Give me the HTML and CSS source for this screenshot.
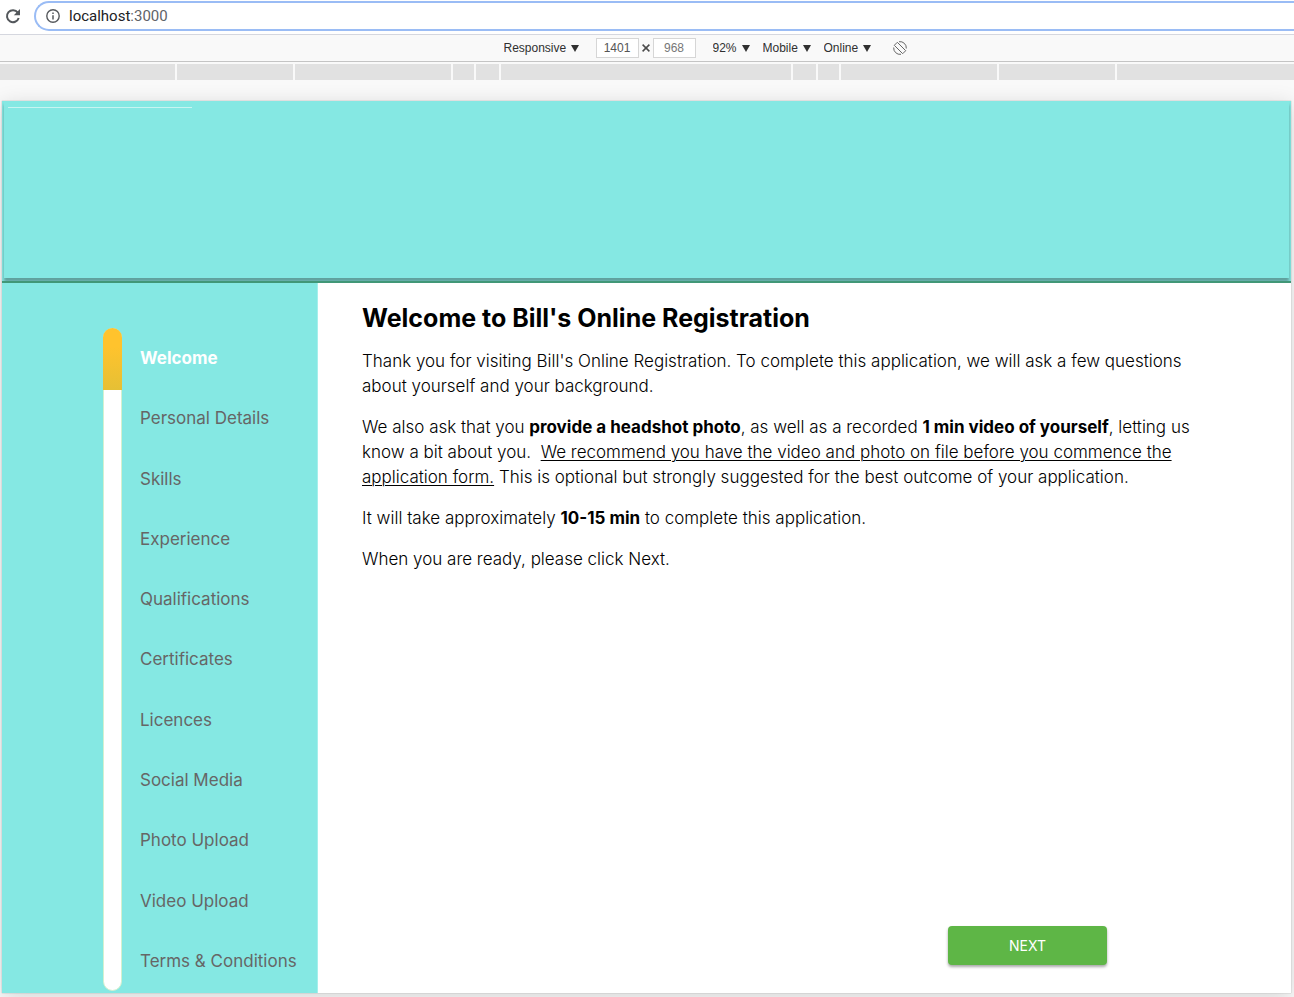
FILE: index.html
```html
<!DOCTYPE html>
<html lang="en">
<head>
<meta charset="utf-8">
<meta name="viewport" content="width=device-width, initial-scale=1">
<title>Bill's Online Registration</title>
<link rel="stylesheet" href="styles.css">
</head>
<body>
<div class="address-bar">
  <button class="reload" type="button" aria-label="Reload">
    <svg width="16" height="16" viewBox="0 0 16 16"><path d="M12.8 4.6A6 6 0 1 0 13.7 10" fill="none" stroke="#53575b" stroke-width="2"/><path d="M15 1v6.2H8.8z" fill="#53575b"/></svg>
  </button>
  <div class="omnibox">
    <svg width="14" height="14" viewBox="0 0 14 14" aria-hidden="true"><circle cx="7" cy="7" r="6.2" fill="none" stroke="#56595d" stroke-width="1.4"/><path d="M7 6.2v4.3M7 3.4v1.5" stroke="#56595d" stroke-width="1.5"/></svg>
    <a class="url" href="#">localhost<span class="port">:3000</span></a>
  </div>
</div>
<div class="device-bar">
  <div class="picker"><select aria-label="Device"><option>Responsive</option></select><svg width="8" height="7" viewBox="0 0 8 7"><path d="M0 0h8L4 7z"/></svg></div>
  <div class="dimensions">
    <input type="text" value="1401" aria-label="Width">
    <svg width="8" height="8" viewBox="0 0 8 8" aria-hidden="true"><path d="M.6.6l6.8 6.8M7.4.6L.6 7.4" stroke="#4a4a4a" stroke-width="1.5"/></svg>
    <input class="muted" type="text" value="968" aria-label="Height">
  </div>
  <div class="picker"><select aria-label="Zoom"><option>92%</option></select><svg width="8" height="7" viewBox="0 0 8 7"><path d="M0 0h8L4 7z"/></svg></div>
  <div class="picker"><select aria-label="Device type"><option>Mobile</option></select><svg width="8" height="7" viewBox="0 0 8 7"><path d="M0 0h8L4 7z"/></svg></div>
  <div class="picker"><select aria-label="Throttling"><option>Online</option></select><svg width="8" height="7" viewBox="0 0 8 7"><path d="M0 0h8L4 7z"/></svg></div>
  <button class="rotate" type="button" aria-label="Rotate">
    <svg width="14" height="14" viewBox="0 0 14 14" fill="none" stroke="#666" stroke-width="1"><path d="M4.300 1.300L12.700 9.700L9.700 12.700L1.300 4.300z"/><path d="M6 .7A6.300 6.300 0 0 1 13.300 7.500M8 13.300A6.300 6.300 0 0 1 .7 6.500"/></svg>
  </button>
</div>
<div class="ruler">
  <i></i><i class="w116"></i><i class="w156"></i><i class="w21"></i><i class="w23"></i><i class="w290"></i><i class="w23"></i><i class="w21"></i><i class="w156"></i><i class="w116"></i><i></i>
</div>
<div class="viewport">
  <div class="page">
    <header class="banner"><div class="banner-panel"><div class="banner-line"></div></div></header>
    <div class="columns">
      <aside class="sidebar">
        <div class="progress"><div class="progress-done"></div></div>
        <nav class="steps">
          <a class="current" href="#">Welcome</a>
          <a href="#">Personal Details</a>
          <a href="#">Skills</a>
          <a href="#">Experience</a>
          <a href="#">Qualifications</a>
          <a href="#">Certificates</a>
          <a href="#">Licences</a>
          <a href="#">Social Media</a>
          <a href="#">Photo Upload</a>
          <a href="#">Video Upload</a>
          <a href="#">Terms &amp; Conditions</a>
        </nav>
      </aside>
      <main class="content">
        <h1>Welcome to Bill's Online Registration</h1>
        <p>Thank you for visiting Bill's Online Registration. To complete this application, we will ask a few questions about yourself and your background.</p>
        <p>We also ask that you <b>provide a headshot photo</b>, as well as a recorded <b>1 min video of yourself</b>, letting us know a bit about you.&nbsp; <u>We recommend you have the video and photo on file before you commence the application form.</u> This is optional but strongly suggested for the best outcome of your application.</p>
        <p>It will take approximately <b>10-15 min</b> to complete this application.</p>
        <p>When you are ready, please click Next.</p>
        <button class="next" type="button">NEXT</button>
      </main>
    </div>
  </div>
</div>
</body>
</html>
```
FILE: styles.css
```css
* { box-sizing: border-box; }
body {
  margin: 0;
  min-height: 100vh;
  display: flex;
  flex-direction: column;
  background: #f9f9f9;
  font-family: Inter, sans-serif;
}
button { border: 0; padding: 0; background: none; }
svg { display: block; flex: none; }

.address-bar {
  display: flex;
  gap: 13px;
  height: 35px;
  padding: 1px 0 3px 5px;
  background: #fff;
  border-bottom: 1px solid #d5d7df;
}
.omnibox {
  flex: 1;
  display: flex;
  align-items: center;
  gap: 9px;
  padding-left: 10px;
  border: 2px solid #9abcf5;
  border-right: 0;
  border-radius: 15px 0 0 15px;
}
.url { color: #202124; font: 15px/20px Roboto, sans-serif; text-decoration: none; }
.port { color: #5f6368; }

.device-bar {
  display: flex;
  align-items: center;
  justify-content: center;
  gap: 13px;
  height: 27px;
  padding-left: 116px;
  border-bottom: 1px solid #c4c4c4;
}
.picker { display: flex; align-items: center; gap: 4px; color: #303030; }
.picker select {
  appearance: none;
  border: 0;
  padding: 0;
  background: none;
  color: inherit;
  font: 12px/16px "Liberation Sans", Arial, sans-serif;
}
.picker svg { fill: #303030; }
.dimensions { display: flex; align-items: center; gap: 3px; margin: 0 4px; }
.dimensions input {
  width: 43px;
  height: 20px;
  padding: 0;
  border: 1px solid #d6d6d6;
  background: #fff;
  color: #555;
  font: 12px/16px "Liberation Sans", Arial, sans-serif;
  text-align: center;
}
.dimensions .muted { color: #777; }
.rotate { margin-left: 9px; }

.ruler { display: flex; gap: 2px; height: 16px; margin: 2px 0 0 -2px; }
.ruler i { flex: 1; background: #e1e1e1; }
.ruler .w21 { flex: 0 0 21px; }
.ruler .w23 { flex: 0 0 23px; }
.ruler .w116 { flex: 0 0 116px; }
.ruler .w156 { flex: 0 0 156px; }
.ruler .w290 { flex: 0 0 290px; }

.viewport {
  flex: 1;
  display: flex;
  padding: 21px 3px 4px 2px;
  overflow: hidden;
}
.page {
  flex: 1;
  display: flex;
  flex-direction: column;
  background: #fff;
  box-shadow: 0 0 1px #999, 0 4px 20px rgba(0, 0, 0, .15);
}
.banner {
  height: 182px;
  padding: 0 2px 3px;
  background: #85e8e3;
  border-bottom: 2px solid #419777;
  overflow: hidden;
}
.banner-panel {
  height: 100%;
  padding: 6px 4px;
  box-shadow: 0 4px 3px rgba(60, 90, 90, .5);
}
.banner-line { width: 184px; height: 1px; background: #c8f4f1; }
.columns { flex: 1; display: flex; }
.sidebar {
  flex: 0 0 316px;
  display: flex;
  gap: 18px;
  padding: 45px 0 2px 101px;
  background: #85e8e3;
  border-right: 1px solid #a5efeb;
}
.progress {
  width: 19px;
  border: 1px solid #d5f0cf;
  border-radius: 10px;
  background: #fff;
}
.progress-done {
  width: 19px;
  height: 62px;
  margin: -1px;
  border-radius: 10px 10px 0 0;
  background: linear-gradient(#ffc32d 30%, #e5c035);
}
.steps { flex: 1; display: grid; grid-template-rows: repeat(11, 1fr); }
.steps a {
  display: flex;
  align-items: center;
  color: #666;
  font-size: 17px;
  line-height: 24px;
  text-decoration: none;
  white-space: nowrap;
}
.steps .current { color: #fff; font-weight: 700; }

.content {
  flex: 1;
  display: flex;
  flex-direction: column;
  padding: 16px 84px 28px 44px;
  color: #000;
  font-size: 17px;
  font-weight: 300;
  line-height: 25px;
}
h1 { margin: 0 0 12px; font-size: 25px; line-height: 38px; font-weight: 700; }
p { margin: 0 0 16px; }
b { font-weight: 700; }
u { text-underline-offset: 2px; text-decoration-thickness: 1px; }
.next {
  width: 159px;
  height: 39px;
  margin: auto 100px 0 auto;
  border-radius: 4px;
  background: #5eb646;
  color: #fff;
  font: 14px/20px Inter, sans-serif;
  box-shadow: 0 2px 3px rgba(0, 0, 0, .35);
}
```
